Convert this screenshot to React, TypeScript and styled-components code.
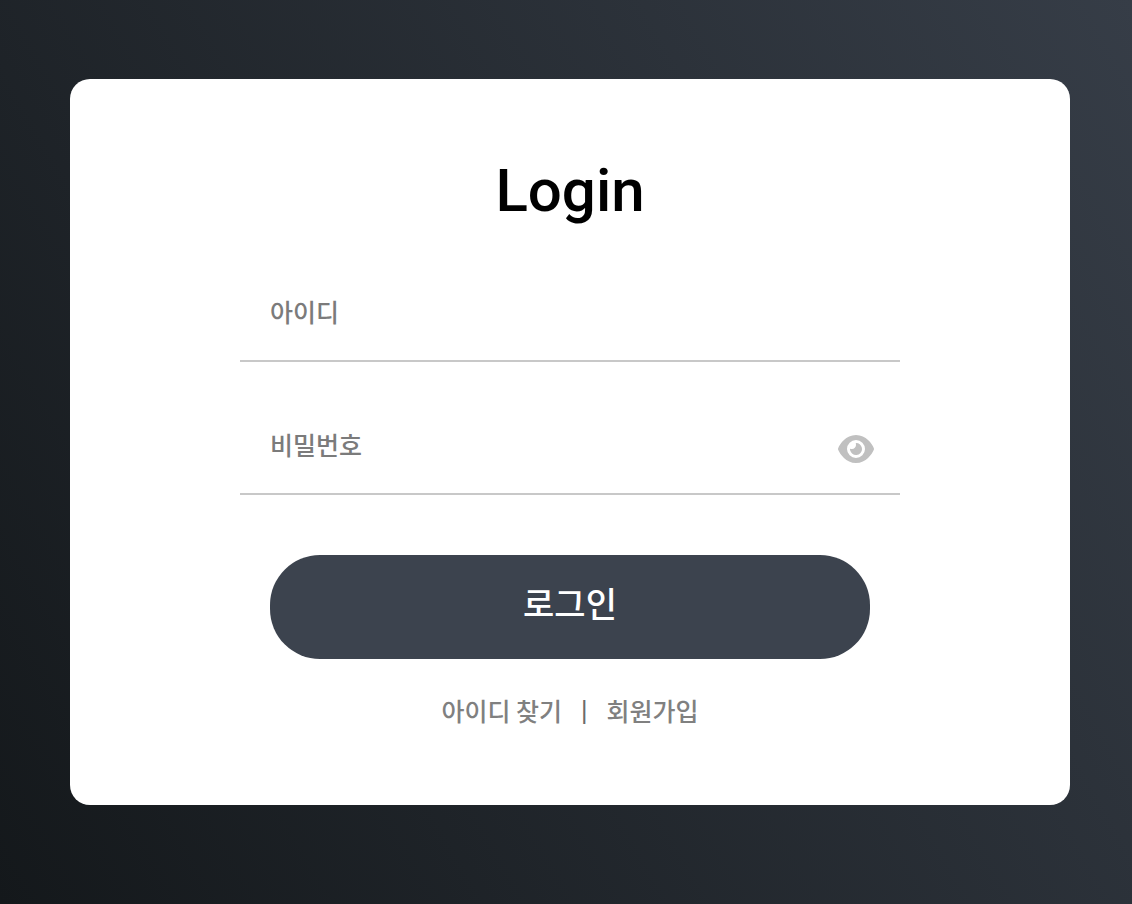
import React from "react";
import styled, { createGlobalStyle } from "styled-components";

const Global = createGlobalStyle`
  * { box-sizing: border-box; }
  body {
    margin: 0;
    font-family: "Noto Sans CJK KR", sans-serif;
  }
`;

const Page = styled.main`
  min-height: 100vh;
  padding: 79px 62px 99px 70px;
  background: linear-gradient(60deg, #14181b, #363d47);
`;

const Card = styled.form`
  max-width: 1000px;
  margin: 0 auto;
  padding: 72px 170px;
  display: flex;
  flex-direction: column;
  background: #fff;
  border-radius: 20px;
`;

const Title = styled.h1`
  margin: 0 0 32px;
  font-family: Roboto, sans-serif;
  font-size: 60px;
  font-weight: 500;
  line-height: 80px;
  text-align: center;
  color: #000;
`;

const Field = styled.div`
  display: flex;
  align-items: center;
  height: 99px;
  margin-bottom: 34px;
  padding: 0 24px 0 30px;
  border-bottom: 2px solid #c8c8c8;
`;

const TextInput = styled.input`
  flex: 1;
  min-width: 0;
  padding: 0 0 2px;
  border: 0;
  outline: 0;
  font: 500 25px/40px "Noto Sans CJK KR", sans-serif;
  color: #222;
  &::placeholder { color: #7b7b7b; opacity: 1; }
`;

const EyeButton = styled.button`
  display: flex;
  padding: 8px 0 0;
  border: 0;
  background: none;
  color: #c0c0c0;
`;

const SubmitButton = styled.button`
  height: 104px;
  margin: 26px 30px 32px;
  padding: 0 0 8px;
  border: 0;
  border-radius: 50px;
  background: #3c434e;
  color: #fff;
  font: 500 34px/50px "Noto Sans CJK KR", sans-serif;
`;

const Links = styled.nav`
  display: flex;
  justify-content: center;
  gap: 19px;
  font-size: 25px;
  font-weight: 500;
  line-height: 38px;
  padding-bottom: 4px;
  color: #808080;
`;

const TextLink = styled.a`
  color: inherit;
  text-decoration: none;
`;

const Divider = styled.span`
  font-family: "Liberation Sans", sans-serif;
  color: #6c6c6c;
`;

export default function App() {
  return (
    <>
      <Global />
      <Page>
        <Card onSubmit={(e: React.FormEvent) => e.preventDefault()}>
          <Title>Login</Title>
          <Field>
            <TextInput type="text" placeholder="아이디" aria-label="아이디" />
          </Field>
          <Field>
            <TextInput type="password" placeholder="비밀번호" aria-label="비밀번호" />
            <EyeButton type="button" aria-label="비밀번호 표시">
              <svg width="40" height="32" viewBox="0 0 576 512" fill="currentColor" aria-hidden="true">
                <path d="M288 32c-80.800 0-145.500 36.800-192.600 80.600C48.600 156 17.300 208 2.500 243.700c-3.300 7.900-3.300 16.700 0 24.600C17.300 304 48.600 356 95.400 399.400C142.500 443.200 207.200 480 288 480s145.500-36.800 192.600-80.600c46.800-43.500 78.100-95.400 93-131.100c3.300-7.900 3.300-16.700 0-24.600c-14.900-35.700-46.200-87.700-93-131.100C433.500 68.800 368.800 32 288 32zM144 256a144 144 0 1 1 288 0a144 144 0 1 1-288 0zm144-64c0 35.300-28.700 64-64 64c-7.100 0-13.900-1.200-20.300-3.300c-5.500-1.800-11.900 1.600-11.700 7.400c.3 6.900 1.300 13.800 3.200 20.700c13.700 51.200 66.400 81.600 117.600 67.900s81.600-66.400 67.900-117.600c-11.100-41.500-47.800-69.400-88.600-71.100c-5.800-.2-9.200 6.100-7.400 11.700c2.100 6.400 3.300 13.200 3.300 20.300z" />
              </svg>
            </EyeButton>
          </Field>
          <SubmitButton type="submit">로그인</SubmitButton>
          <Links>
            <TextLink href="#find">아이디 찾기</TextLink>
            <Divider>|</Divider>
            <TextLink href="#join">회원가입</TextLink>
          </Links>
        </Card>
      </Page>
    </>
  );
}
